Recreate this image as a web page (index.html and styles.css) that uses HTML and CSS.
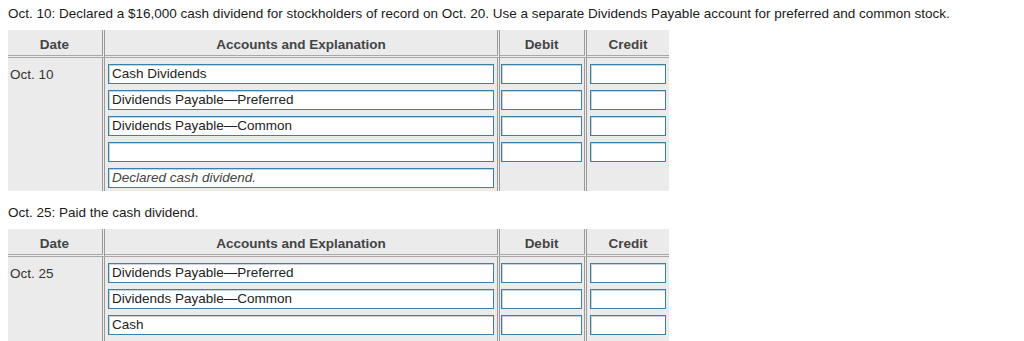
FILE: index.html
```html
<!DOCTYPE html>
<html>
<head>
<meta charset="utf-8">
<link rel="stylesheet" href="styles.css">
</head>
<body>
<p class="prompt">Oct. 10: Declared a $16,000 cash dividend for stockholders of record on Oct. 20. Use a separate Dividends Payable account for preferred and common stock.</p>
<div class="journal">
  <div class="row head">
    <div class="cell c-date">Date</div>
    <div class="cell c-acct">Accounts and Explanation</div>
    <div class="cell c-debit">Debit</div>
    <div class="cell c-credit">Credit</div>
  </div>
  <div class="row first">
    <div class="cell c-date"><span class="date">Oct. 10</span></div>
    <div class="cell c-acct"><div class="field">Cash Dividends</div></div>
    <div class="cell c-debit"><div class="field"></div></div>
    <div class="cell c-credit"><div class="field"></div></div>
  </div>
  <div class="row">
    <div class="cell c-date"></div>
    <div class="cell c-acct"><div class="field">Dividends Payable—Preferred</div></div>
    <div class="cell c-debit"><div class="field"></div></div>
    <div class="cell c-credit"><div class="field"></div></div>
  </div>
  <div class="row">
    <div class="cell c-date"></div>
    <div class="cell c-acct"><div class="field">Dividends Payable—Common</div></div>
    <div class="cell c-debit"><div class="field"></div></div>
    <div class="cell c-credit"><div class="field"></div></div>
  </div>
  <div class="row">
    <div class="cell c-date"></div>
    <div class="cell c-acct"><div class="field"></div></div>
    <div class="cell c-debit"><div class="field"></div></div>
    <div class="cell c-credit"><div class="field"></div></div>
  </div>
  <div class="row">
    <div class="cell c-date"></div>
    <div class="cell c-acct"><div class="field note">Declared cash dividend.</div></div>
    <div class="cell c-debit"></div>
    <div class="cell c-credit"></div>
  </div>
</div>

<p class="prompt second">Oct. 25: Paid the cash dividend.</p>
<div class="journal">
  <div class="row head">
    <div class="cell c-date">Date</div>
    <div class="cell c-acct">Accounts and Explanation</div>
    <div class="cell c-debit">Debit</div>
    <div class="cell c-credit">Credit</div>
  </div>
  <div class="row first">
    <div class="cell c-date"><span class="date">Oct. 25</span></div>
    <div class="cell c-acct"><div class="field">Dividends Payable—Preferred</div></div>
    <div class="cell c-debit"><div class="field"></div></div>
    <div class="cell c-credit"><div class="field"></div></div>
  </div>
  <div class="row">
    <div class="cell c-date"></div>
    <div class="cell c-acct"><div class="field">Dividends Payable—Common</div></div>
    <div class="cell c-debit"><div class="field"></div></div>
    <div class="cell c-credit"><div class="field"></div></div>
  </div>
  <div class="row">
    <div class="cell c-date"></div>
    <div class="cell c-acct"><div class="field">Cash</div></div>
    <div class="cell c-debit"><div class="field"></div></div>
    <div class="cell c-credit"><div class="field"></div></div>
  </div>
  <div class="row">
    <div class="cell c-date"></div>
    <div class="cell c-acct"></div>
    <div class="cell c-debit"></div>
    <div class="cell c-credit"></div>
  </div>
</div>
</body>
</html>
```

FILE: styles.css
```css
html, body {
  margin: 0;
  padding: 0;
  background: #ffffff;
}
body {
  padding: 6px 8px 0 8px;
  font-family: "Liberation Sans", Arial, Helvetica, sans-serif;
  font-size: 13.5px;
  color: #222222;
}
.prompt {
  margin: 0 0 9px 0;
  line-height: 15px;
  height: 15px;
  color: #1a1a1a;
}
.prompt.second {
  margin-top: 14px;
  margin-bottom: 9px;
}
.journal {
  width: 661px;
  background: #ebebeb;
}
.row {
  display: grid;
  grid-template-columns: 97px 395px 87px 82px;
}
.cell {
  box-sizing: border-box;
  padding: 3px 3px 3px 3px;
}
.c-date, .c-acct, .c-debit {
  border-right: 3px double #9a9a9a;
}
.head .cell {
  height: 28px;
  border-bottom: 3px double #a8a8a8;
  text-align: center;
  font-weight: bold;
  color: #444444;
  line-height: 21px;
  padding-top: 4px;
  padding-bottom: 0;
}
.first .cell {
  padding-top: 6px;
}
.c-date {
  padding-left: 2px;
}
.c-debit {
  padding-left: 1px;
  padding-right: 2px;
}
.date {
  display: block;
  height: 20px;
  line-height: 22px;
  color: #333333;
}
.field {
  box-sizing: border-box;
  height: 20px;
  background: #ffffff;
  border: 1px solid #3a80a7;
  box-shadow: inset 1px 1px 0 #c9d3da;
  padding: 0 3px;
  line-height: 18px;
  color: #222222;
  white-space: nowrap;
  overflow: hidden;
}
.cell:empty {
  height: 26px;
}
.note {
  font-style: italic;
  color: #444444;
}
```
